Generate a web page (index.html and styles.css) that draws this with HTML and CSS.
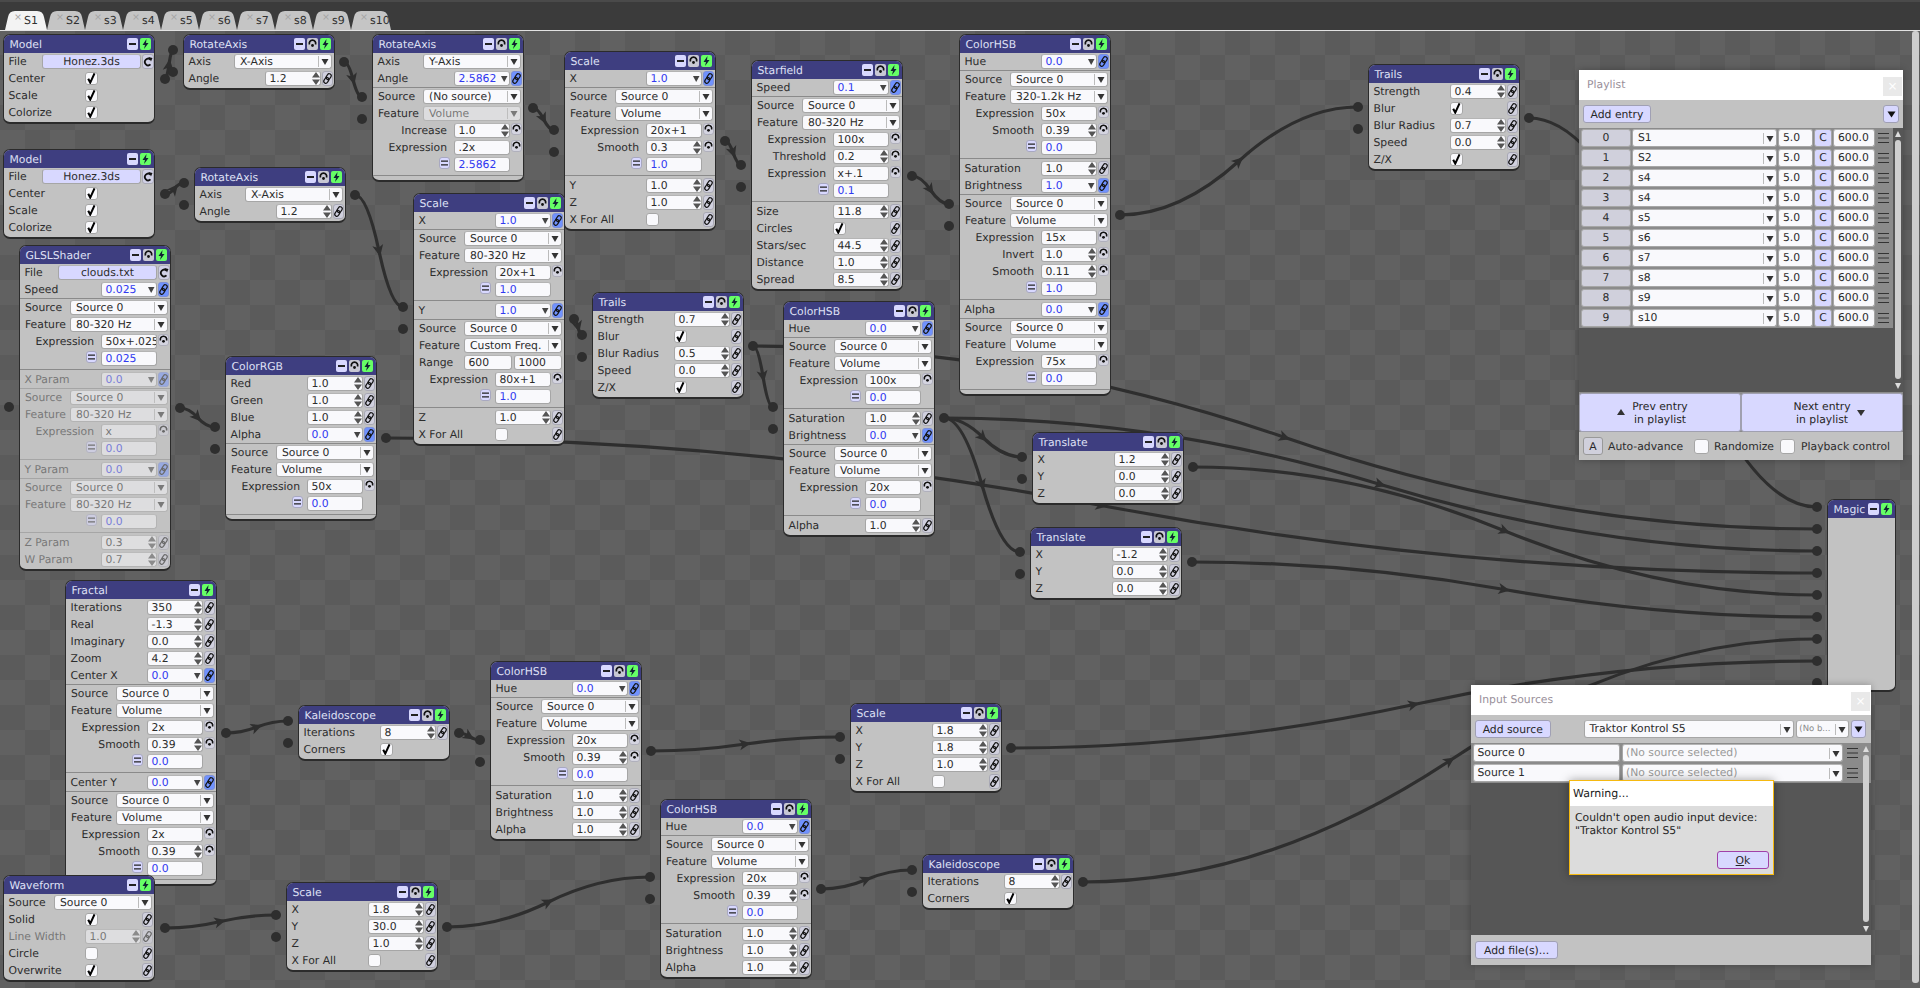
FILE: index.html
```html
<!DOCTYPE html>
<html lang="en">
<head>
<meta charset="utf-8">
<title>Node graph</title>
<link rel="stylesheet" href="styles.css">
</head>
<body>
<nav class="tabs">
<div class="tab on"><em>×</em>S1</div><div class="tab"><em>×</em>S2</div><div class="tab"><em>×</em>s3</div><div class="tab"><em>×</em>s4</div><div class="tab"><em>×</em>s5</div><div class="tab"><em>×</em>s6</div><div class="tab"><em>×</em>s7</div><div class="tab"><em>×</em>s8</div><div class="tab"><em>×</em>s9</div><div class="tab"><em>×</em>s10</div>
</nav>
<main class="canvas">
<svg class="wires" width="1920" height="957" viewBox="0 31 1920 957">
<defs>
<marker id="ar" markerUnits="userSpaceOnUse" markerWidth="14" markerHeight="14" refX="7" refY="7" orient="auto"><path d="M1 1.5L12.5 7L1 12.5L4 7Z" fill="#2e2e2e"/></marker>
<g id="pi"><circle r="5"/><path d="M0 0H11"/></g>
<g id="po"><circle r="5"/><path d="M0 0H-11"/></g>
</defs>
<g class="w" marker-mid="url(#ar)">
<path d="M165 79Q167 79 169 64.5T173 50"/>
<path d="M344 62Q348.5 62 353 79.5T362 97"/>
<path d="M533 108Q538 108 543.5 119T554 130"/>
<path d="M725 141Q729 141 733 152.5T741 165"/>
<path d="M912 176Q921 176 930.5 190T949 204"/>
<path d="M1120 215Q1179.5 215 1239 161T1358 107"/>
<path d="M1529 118Q1601 118 1673 312.5T1817 507"/>
<path d="M165 194Q170 194 174.5 188.5T184 183"/>
<path d="M355 195Q367 195 379 251T403 307"/>
<path d="M574 319Q576 319 578 327T582 335"/>
<path d="M753 346Q758 346 763 376.5T773 407"/>
<path d="M753 346Q1019 346 1285 437.5T1817 529"/>
<path d="M180 408Q189 408 197.5 417.5T215 427"/>
<path d="M386 438Q744 438 1101.5 505.5T1817 573"/>
<path d="M944 418Q963.5 418 983 437.5T1022 457"/>
<path d="M944 418Q963 418 982 485T1020 552"/>
<path d="M944 418Q1162 418 1380.5 484.5T1817 551"/>
<path d="M1193 467Q1349 467 1505 531T1817 595"/>
<path d="M1192 562Q1348 562 1504.5 589.5T1817 617"/>
<path d="M226 733Q241.5 733 257 727T288 721"/>
<path d="M459 733Q464 733 469.5 736.5T480 740"/>
<path d="M651 751Q698 751 745.5 744T840 737"/>
<path d="M1011 748Q1212.5 748 1414 704.5T1817 661"/>
<path d="M165 928Q193 928 220.5 921.5T276 915"/>
<path d="M447 927Q498 927 548.5 902T650 877"/>
<path d="M821 889Q844 889 866.5 879.5T912 870"/>
<path d="M1083 882Q1266.5 882 1450 760.5T1817 639"/>
</g>
<g class="p">
<use href="#pi" x="173" y="50"/><use href="#pi" x="173" y="72"/><use href="#pi" x="362" y="97"/><use href="#pi" x="362" y="119"/>
<use href="#pi" x="554" y="130"/><use href="#pi" x="554" y="152"/><use href="#pi" x="741" y="165"/><use href="#pi" x="741" y="187"/>
<use href="#pi" x="949" y="204"/><use href="#pi" x="949" y="226"/><use href="#pi" x="1358" y="107"/><use href="#pi" x="1358" y="129"/>
<use href="#pi" x="184" y="183"/><use href="#pi" x="184" y="205"/><use href="#pi" x="9" y="407"/><use href="#pi" x="215" y="427"/><use href="#pi" x="215" y="449"/>
<use href="#pi" x="403" y="307"/><use href="#pi" x="403" y="329"/><use href="#pi" x="582" y="335"/><use href="#pi" x="582" y="357"/>
<use href="#pi" x="773" y="407"/><use href="#pi" x="773" y="429"/><use href="#pi" x="1022" y="457"/><use href="#pi" x="1022" y="479"/>
<use href="#pi" x="1020" y="552"/><use href="#pi" x="1020" y="574"/><use href="#pi" x="288" y="721"/><use href="#pi" x="288" y="743"/>
<use href="#pi" x="480" y="740"/><use href="#pi" x="480" y="762"/><use href="#pi" x="840" y="737"/><use href="#pi" x="840" y="759"/>
<use href="#pi" x="276" y="915"/><use href="#pi" x="276" y="937"/><use href="#pi" x="650" y="877"/><use href="#pi" x="650" y="899"/>
<use href="#pi" x="912" y="870"/><use href="#pi" x="912" y="892"/>
<use href="#pi" x="1817" y="507"/><use href="#pi" x="1817" y="529"/><use href="#pi" x="1817" y="551"/><use href="#pi" x="1817" y="573"/><use href="#pi" x="1817" y="595"/><use href="#pi" x="1817" y="617"/><use href="#pi" x="1817" y="639"/><use href="#pi" x="1817" y="661"/><use href="#pi" x="1817" y="683"/>
<use href="#po" x="165" y="79"/><use href="#po" x="344" y="62"/><use href="#po" x="533" y="108"/><use href="#po" x="725" y="141"/><use href="#po" x="912" y="176"/><use href="#po" x="1120" y="215"/>
<use href="#po" x="1529" y="118"/><use href="#po" x="165" y="194"/><use href="#po" x="355" y="195"/><use href="#po" x="180" y="408"/><use href="#po" x="386" y="438"/><use href="#po" x="574" y="319"/>
<use href="#po" x="753" y="346"/><use href="#po" x="944" y="418"/><use href="#po" x="1193" y="467"/><use href="#po" x="1192" y="562"/><use href="#po" x="226" y="733"/><use href="#po" x="459" y="733"/>
<use href="#po" x="651" y="751"/><use href="#po" x="1011" y="748"/><use href="#po" x="165" y="928"/><use href="#po" x="447" y="927"/><use href="#po" x="821" y="889"/><use href="#po" x="1083" y="882"/>
</g>
</svg>

<div class="node" style="left:3px;top:3px"><div class="t"><span>Model</span><i class="bm"></i><i class="bg"></i></div>
<div class="r fl"><label>File</label><i class="f lv">Honez.3ds</i><i class="rl"></i></div>
<div class="r"><label>Center</label><i class="c on"></i></div>
<div class="r"><label>Scale</label><i class="c on"></i></div>
<div class="r"><label>Colorize</label><i class="c on"></i></div></div>

<div class="node" style="left:183px;top:3px"><div class="t"><span>RotateAxis</span><i class="bm"></i><i class="ba"></i><i class="bg"></i></div>
<div class="r s a"><label>Axis</label><i class="f sel">X-Axis</i></div>
<div class="r"><label>Angle</label><i class="f sp">1.2</i><i class="l"></i></div></div>

<div class="node" style="left:372px;top:3px"><div class="t"><span>RotateAxis</span><i class="bm"></i><i class="ba"></i><i class="bg"></i></div>
<div class="r s a"><label>Axis</label><i class="f sel">Y-Axis</i></div>
<div class="r"><label>Angle</label><i class="f d v">2.5862</i><i class="lb"></i></div>
<div class="sub">
<div class="r s"><label>Source</label><i class="f sel">(No source)</i></div>
<div class="r s"><label>Feature</label><i class="f sel dis">Volume</i></div>
<div class="r e"><label>Increase</label><i class="f sp">1.0</i><i class="m"></i></div>
<div class="r e"><label>Expression</label><i class="f">.2x</i><i class="m"></i></div>
<div class="r e"><i class="q"></i><i class="f v">2.5862</i></div></div></div>

<div class="node" style="left:564px;top:20px"><div class="t"><span>Scale</span><i class="bm"></i><i class="ba"></i><i class="bg"></i></div>
<div class="r"><label>X</label><i class="f d v">1.0</i><i class="lb"></i></div>
<div class="sub">
<div class="r s"><label>Source</label><i class="f sel">Source 0</i></div>
<div class="r s"><label>Feature</label><i class="f sel">Volume</i></div>
<div class="r e"><label>Expression</label><i class="f">20x+1</i><i class="m"></i></div>
<div class="r e"><label>Smooth</label><i class="f sp">0.3</i><i class="m"></i></div>
<div class="r e"><i class="q"></i><i class="f v">1.0</i></div></div>
<div class="r"><label>Y</label><i class="f sp">1.0</i><i class="l"></i></div>
<div class="r"><label>Z</label><i class="f sp">1.0</i><i class="l"></i></div>
<div class="r"><label>X For All</label><i class="c"></i><i class="l"></i></div></div>

<div class="node" style="left:751px;top:29px"><div class="t"><span>Starfield</span><i class="bm"></i><i class="ba"></i><i class="bg"></i></div>
<div class="r"><label>Speed</label><i class="f d v">0.1</i><i class="lb"></i></div>
<div class="sub">
<div class="r s"><label>Source</label><i class="f sel">Source 0</i></div>
<div class="r s"><label>Feature</label><i class="f sel">80-320 Hz</i></div>
<div class="r e"><label>Expression</label><i class="f">100x</i><i class="m"></i></div>
<div class="r e"><label>Threshold</label><i class="f sp">0.2</i><i class="m"></i></div>
<div class="r e"><label>Expression</label><i class="f">x+.1</i><i class="m"></i></div>
<div class="r e"><i class="q"></i><i class="f v">0.1</i></div></div>
<div class="r"><label>Size</label><i class="f sp">11.8</i><i class="l"></i></div>
<div class="r"><label>Circles</label><i class="c on"></i><i class="l"></i></div>
<div class="r"><label>Stars/sec</label><i class="f sp">44.5</i><i class="l"></i></div>
<div class="r"><label>Distance</label><i class="f sp">1.0</i><i class="l"></i></div>
<div class="r"><label>Spread</label><i class="f sp">8.5</i><i class="l"></i></div></div>

<div class="node" style="left:959px;top:3px"><div class="t"><span>ColorHSB</span><i class="bm"></i><i class="ba"></i><i class="bg"></i></div>
<div class="r"><label>Hue</label><i class="f d v">0.0</i><i class="lb"></i></div>
<div class="sub">
<div class="r s"><label>Source</label><i class="f sel">Source 0</i></div>
<div class="r s"><label>Feature</label><i class="f sel">320-1.2k Hz</i></div>
<div class="r e"><label>Expression</label><i class="f">50x</i><i class="m"></i></div>
<div class="r e"><label>Smooth</label><i class="f sp">0.39</i><i class="m"></i></div>
<div class="r e"><i class="q"></i><i class="f v">0.0</i></div></div>
<div class="r"><label>Saturation</label><i class="f sp">1.0</i><i class="l"></i></div>
<div class="r"><label>Brightness</label><i class="f d v">1.0</i><i class="lb"></i></div>
<div class="sub">
<div class="r s"><label>Source</label><i class="f sel">Source 0</i></div>
<div class="r s"><label>Feature</label><i class="f sel">Volume</i></div>
<div class="r e"><label>Expression</label><i class="f">15x</i><i class="m"></i></div>
<div class="r e"><label>Invert</label><i class="f sp">1.0</i><i class="m"></i></div>
<div class="r e"><label>Smooth</label><i class="f sp">0.11</i><i class="m"></i></div>
<div class="r e"><i class="q"></i><i class="f v">1.0</i></div></div>
<div class="r"><label>Alpha</label><i class="f d v">0.0</i><i class="lb"></i></div>
<div class="sub">
<div class="r s"><label>Source</label><i class="f sel">Source 0</i></div>
<div class="r s"><label>Feature</label><i class="f sel">Volume</i></div>
<div class="r e"><label>Expression</label><i class="f">75x</i><i class="m"></i></div>
<div class="r e"><i class="q"></i><i class="f v">0.0</i></div></div></div>

<div class="node" style="left:1368px;top:33px"><div class="t"><span>Trails</span><i class="bm"></i><i class="ba"></i><i class="bg"></i></div>
<div class="r"><label>Strength</label><i class="f sp">0.4</i><i class="l"></i></div>
<div class="r"><label>Blur</label><i class="c on"></i><i class="l"></i></div>
<div class="r"><label>Blur Radius</label><i class="f sp">0.7</i><i class="l"></i></div>
<div class="r"><label>Speed</label><i class="f sp">0.0</i><i class="l"></i></div>
<div class="r"><label>Z/X</label><i class="c on"></i><i class="l"></i></div></div>

<div class="node" style="left:3px;top:118px"><div class="t"><span>Model</span><i class="bm"></i><i class="bg"></i></div>
<div class="r fl"><label>File</label><i class="f lv">Honez.3ds</i><i class="rl"></i></div>
<div class="r"><label>Center</label><i class="c on"></i></div>
<div class="r"><label>Scale</label><i class="c on"></i></div>
<div class="r"><label>Colorize</label><i class="c on"></i></div></div>

<div class="node" style="left:194px;top:136px"><div class="t"><span>RotateAxis</span><i class="bm"></i><i class="ba"></i><i class="bg"></i></div>
<div class="r s a"><label>Axis</label><i class="f sel">X-Axis</i></div>
<div class="r"><label>Angle</label><i class="f sp">1.2</i><i class="l"></i></div></div>

<div class="node" style="left:19px;top:214px"><div class="t"><span>GLSLShader</span><i class="bm"></i><i class="ba"></i><i class="bg"></i></div>
<div class="r fl"><label>File</label><i class="f lv">clouds.txt</i><i class="rl"></i></div>
<div class="r"><label>Speed</label><i class="f d v">0.025</i><i class="lb"></i></div>
<div class="sub">
<div class="r s"><label>Source</label><i class="f sel">Source 0</i></div>
<div class="r s"><label>Feature</label><i class="f sel">80-320 Hz</i></div>
<div class="r e"><label>Expression</label><i class="f">50x+.025</i><i class="m"></i></div>
<div class="r e"><i class="q"></i><i class="f v">0.025</i></div></div>
<div class="dis">
<div class="r"><label>X Param</label><i class="f d v">0.0</i><i class="lb"></i></div>
<div class="sub">
<div class="r s"><label>Source</label><i class="f sel">Source 0</i></div>
<div class="r s"><label>Feature</label><i class="f sel">80-320 Hz</i></div>
<div class="r e"><label>Expression</label><i class="f">x</i><i class="m"></i></div>
<div class="r e"><i class="q"></i><i class="f v">0.0</i></div></div>
<div class="r"><label>Y Param</label><i class="f d v">0.0</i><i class="lb"></i></div>
<div class="sub">
<div class="r s"><label>Source</label><i class="f sel">Source 0</i></div>
<div class="r s"><label>Feature</label><i class="f sel">80-320 Hz</i></div>
<div class="r e"><i class="q"></i><i class="f v">0.0</i></div></div>
<div class="r"><label>Z Param</label><i class="f sp">0.3</i><i class="l"></i></div>
<div class="r"><label>W Param</label><i class="f sp">0.7</i><i class="l"></i></div>
</div></div>

<div class="node" style="left:225px;top:325px"><div class="t"><span>ColorRGB</span><i class="bm"></i><i class="ba"></i><i class="bg"></i></div>
<div class="r"><label>Red</label><i class="f sp">1.0</i><i class="l"></i></div>
<div class="r"><label>Green</label><i class="f sp">1.0</i><i class="l"></i></div>
<div class="r"><label>Blue</label><i class="f sp">1.0</i><i class="l"></i></div>
<div class="r"><label>Alpha</label><i class="f d v">0.0</i><i class="lb"></i></div>
<div class="sub">
<div class="r s"><label>Source</label><i class="f sel">Source 0</i></div>
<div class="r s"><label>Feature</label><i class="f sel">Volume</i></div>
<div class="r e"><label>Expression</label><i class="f">50x</i><i class="m"></i></div>
<div class="r e"><i class="q"></i><i class="f v">0.0</i></div></div></div>

<div class="node" style="left:413px;top:162px"><div class="t"><span>Scale</span><i class="bm"></i><i class="ba"></i><i class="bg"></i></div>
<div class="r"><label>X</label><i class="f d v">1.0</i><i class="lb"></i></div>
<div class="sub">
<div class="r s"><label>Source</label><i class="f sel">Source 0</i></div>
<div class="r s"><label>Feature</label><i class="f sel">80-320 Hz</i></div>
<div class="r e"><label>Expression</label><i class="f">20x+1</i><i class="m"></i></div>
<div class="r e"><i class="q"></i><i class="f v">1.0</i></div></div>
<div class="r"><label>Y</label><i class="f d v">1.0</i><i class="lb"></i></div>
<div class="sub">
<div class="r s"><label>Source</label><i class="f sel">Source 0</i></div>
<div class="r s"><label>Feature</label><i class="f sel">Custom Freq.</i></div>
<div class="r s"><label>Range</label><span class="rg"><i class="f">600</i><i class="f">1000</i></span></div>
<div class="r e"><label>Expression</label><i class="f">80x+1</i><i class="m"></i></div>
<div class="r e"><i class="q"></i><i class="f v">1.0</i></div></div>
<div class="r"><label>Z</label><i class="f sp">1.0</i><i class="l"></i></div>
<div class="r"><label>X For All</label><i class="c"></i><i class="l"></i></div></div>

<div class="node" style="left:592px;top:261px"><div class="t"><span>Trails</span><i class="bm"></i><i class="ba"></i><i class="bg"></i></div>
<div class="r"><label>Strength</label><i class="f sp">0.7</i><i class="l"></i></div>
<div class="r"><label>Blur</label><i class="c on"></i><i class="l"></i></div>
<div class="r"><label>Blur Radius</label><i class="f sp">0.5</i><i class="l"></i></div>
<div class="r"><label>Speed</label><i class="f sp">0.0</i><i class="l"></i></div>
<div class="r"><label>Z/X</label><i class="c on"></i><i class="l"></i></div></div>

<div class="node" style="left:783px;top:270px"><div class="t"><span>ColorHSB</span><i class="bm"></i><i class="ba"></i><i class="bg"></i></div>
<div class="r"><label>Hue</label><i class="f d v">0.0</i><i class="lb"></i></div>
<div class="sub">
<div class="r s"><label>Source</label><i class="f sel">Source 0</i></div>
<div class="r s"><label>Feature</label><i class="f sel">Volume</i></div>
<div class="r e"><label>Expression</label><i class="f">100x</i><i class="m"></i></div>
<div class="r e"><i class="q"></i><i class="f v">0.0</i></div></div>
<div class="r"><label>Saturation</label><i class="f sp">1.0</i><i class="l"></i></div>
<div class="r"><label>Brightness</label><i class="f d v">0.0</i><i class="lb"></i></div>
<div class="sub">
<div class="r s"><label>Source</label><i class="f sel">Source 0</i></div>
<div class="r s"><label>Feature</label><i class="f sel">Volume</i></div>
<div class="r e"><label>Expression</label><i class="f">20x</i><i class="m"></i></div>
<div class="r e"><i class="q"></i><i class="f v">0.0</i></div></div>
<div class="r"><label>Alpha</label><i class="f sp">1.0</i><i class="l"></i></div></div>

<div class="node" style="left:1032px;top:401px"><div class="t"><span>Translate</span><i class="bm"></i><i class="ba"></i><i class="bg"></i></div>
<div class="r"><label>X</label><i class="f sp">1.2</i><i class="l"></i></div>
<div class="r"><label>Y</label><i class="f sp">0.0</i><i class="l"></i></div>
<div class="r"><label>Z</label><i class="f sp">0.0</i><i class="l"></i></div></div>

<div class="node" style="left:1030px;top:496px"><div class="t"><span>Translate</span><i class="bm"></i><i class="ba"></i><i class="bg"></i></div>
<div class="r"><label>X</label><i class="f sp">-1.2</i><i class="l"></i></div>
<div class="r"><label>Y</label><i class="f sp">0.0</i><i class="l"></i></div>
<div class="r"><label>Z</label><i class="f sp">0.0</i><i class="l"></i></div></div>

<div class="node" style="left:65px;top:549px"><div class="t"><span>Fractal</span><i class="bm"></i><i class="bg"></i></div>
<div class="r"><label>Iterations</label><i class="f sp">350</i><i class="l"></i></div>
<div class="r"><label>Real</label><i class="f sp">-1.3</i><i class="l"></i></div>
<div class="r"><label>Imaginary</label><i class="f sp">0.0</i><i class="l"></i></div>
<div class="r"><label>Zoom</label><i class="f sp">4.2</i><i class="l"></i></div>
<div class="r"><label>Center X</label><i class="f d v">0.0</i><i class="lb"></i></div>
<div class="sub">
<div class="r s"><label>Source</label><i class="f sel">Source 0</i></div>
<div class="r s"><label>Feature</label><i class="f sel">Volume</i></div>
<div class="r e"><label>Expression</label><i class="f">2x</i><i class="m"></i></div>
<div class="r e"><label>Smooth</label><i class="f sp">0.39</i><i class="m"></i></div>
<div class="r e"><i class="q"></i><i class="f v">0.0</i></div></div>
<div class="r"><label>Center Y</label><i class="f d v">0.0</i><i class="lb"></i></div>
<div class="sub">
<div class="r s"><label>Source</label><i class="f sel">Source 0</i></div>
<div class="r s"><label>Feature</label><i class="f sel">Volume</i></div>
<div class="r e"><label>Expression</label><i class="f">2x</i><i class="m"></i></div>
<div class="r e"><label>Smooth</label><i class="f sp">0.39</i><i class="m"></i></div>
<div class="r e"><i class="q"></i><i class="f v">0.0</i></div></div></div>

<div class="node" style="left:298px;top:674px"><div class="t"><span>Kaleidoscope</span><i class="bm"></i><i class="ba"></i><i class="bg"></i></div>
<div class="r"><label>Iterations</label><i class="f sp">8</i><i class="l"></i></div>
<div class="r"><label>Corners</label><i class="c on"></i></div></div>

<div class="node" style="left:3px;top:844px"><div class="t"><span>Waveform</span><i class="bm"></i><i class="bg"></i></div>
<div class="r s a"><label>Source</label><i class="f sel">Source 0</i></div>
<div class="r"><label>Solid</label><i class="c on"></i><i class="l"></i></div>
<div class="r dis"><label>Line Width</label><i class="f sp">1.0</i><i class="l"></i></div>
<div class="r"><label>Circle</label><i class="c"></i><i class="l"></i></div>
<div class="r"><label>Overwrite</label><i class="c on"></i><i class="l"></i></div></div>

<div class="node" style="left:286px;top:851px"><div class="t"><span>Scale</span><i class="bm"></i><i class="ba"></i><i class="bg"></i></div>
<div class="r"><label>X</label><i class="f sp">1.8</i><i class="l"></i></div>
<div class="r"><label>Y</label><i class="f sp">30.0</i><i class="l"></i></div>
<div class="r"><label>Z</label><i class="f sp">1.0</i><i class="l"></i></div>
<div class="r"><label>X For All</label><i class="c"></i><i class="l"></i></div></div>

<div class="node" style="left:490px;top:630px"><div class="t"><span>ColorHSB</span><i class="bm"></i><i class="ba"></i><i class="bg"></i></div>
<div class="r"><label>Hue</label><i class="f d v">0.0</i><i class="lb"></i></div>
<div class="sub">
<div class="r s"><label>Source</label><i class="f sel">Source 0</i></div>
<div class="r s"><label>Feature</label><i class="f sel">Volume</i></div>
<div class="r e"><label>Expression</label><i class="f">20x</i><i class="m"></i></div>
<div class="r e"><label>Smooth</label><i class="f sp">0.39</i><i class="m"></i></div>
<div class="r e"><i class="q"></i><i class="f v">0.0</i></div></div>
<div class="r"><label>Saturation</label><i class="f sp">1.0</i><i class="l"></i></div>
<div class="r"><label>Brightness</label><i class="f sp">1.0</i><i class="l"></i></div>
<div class="r"><label>Alpha</label><i class="f sp">1.0</i><i class="l"></i></div></div>

<div class="node" style="left:850px;top:672px"><div class="t"><span>Scale</span><i class="bm"></i><i class="ba"></i><i class="bg"></i></div>
<div class="r"><label>X</label><i class="f sp">1.8</i><i class="l"></i></div>
<div class="r"><label>Y</label><i class="f sp">1.8</i><i class="l"></i></div>
<div class="r"><label>Z</label><i class="f sp">1.0</i><i class="l"></i></div>
<div class="r"><label>X For All</label><i class="c"></i><i class="l"></i></div></div>

<div class="node" style="left:660px;top:768px"><div class="t"><span>ColorHSB</span><i class="bm"></i><i class="ba"></i><i class="bg"></i></div>
<div class="r"><label>Hue</label><i class="f d v">0.0</i><i class="lb"></i></div>
<div class="sub">
<div class="r s"><label>Source</label><i class="f sel">Source 0</i></div>
<div class="r s"><label>Feature</label><i class="f sel">Volume</i></div>
<div class="r e"><label>Expression</label><i class="f">20x</i><i class="m"></i></div>
<div class="r e"><label>Smooth</label><i class="f sp">0.39</i><i class="m"></i></div>
<div class="r e"><i class="q"></i><i class="f v">0.0</i></div></div>
<div class="r"><label>Saturation</label><i class="f sp">1.0</i><i class="l"></i></div>
<div class="r"><label>Brightness</label><i class="f sp">1.0</i><i class="l"></i></div>
<div class="r"><label>Alpha</label><i class="f sp">1.0</i><i class="l"></i></div></div>

<div class="node" style="left:922px;top:823px"><div class="t"><span>Kaleidoscope</span><i class="bm"></i><i class="ba"></i><i class="bg"></i></div>
<div class="r"><label>Iterations</label><i class="f sp">8</i><i class="l"></i></div>
<div class="r"><label>Corners</label><i class="c on"></i></div></div>

<div class="node magic" style="left:1827px;top:468px"><div class="t"><span>Magic</span><i class="bm"></i><i class="bg"></i></div></div>

<section class="win pl">
<header class="wt">Playlist<i class="x">×</i></header>
<div class="tb"><button class="btn">Add entry</button><i class="drop"></i></div>
<div class="lst">
<div class="rows">
<div class="pr"><i class="idx">0</i><i class="f sel">S1</i><i class="f">5.0</i><i class="cb">C</i><i class="f">600.0</i><i class="bur"></i></div>
<div class="pr"><i class="idx">1</i><i class="f sel">S2</i><i class="f">5.0</i><i class="cb">C</i><i class="f">600.0</i><i class="bur"></i></div>
<div class="pr"><i class="idx">2</i><i class="f sel">s4</i><i class="f">5.0</i><i class="cb">C</i><i class="f">600.0</i><i class="bur"></i></div>
<div class="pr"><i class="idx">3</i><i class="f sel">s4</i><i class="f">5.0</i><i class="cb">C</i><i class="f">600.0</i><i class="bur"></i></div>
<div class="pr"><i class="idx">4</i><i class="f sel">s5</i><i class="f">5.0</i><i class="cb">C</i><i class="f">600.0</i><i class="bur"></i></div>
<div class="pr"><i class="idx">5</i><i class="f sel">s6</i><i class="f">5.0</i><i class="cb">C</i><i class="f">600.0</i><i class="bur"></i></div>
<div class="pr"><i class="idx">6</i><i class="f sel">s7</i><i class="f">5.0</i><i class="cb">C</i><i class="f">600.0</i><i class="bur"></i></div>
<div class="pr"><i class="idx">7</i><i class="f sel">s8</i><i class="f">5.0</i><i class="cb">C</i><i class="f">600.0</i><i class="bur"></i></div>
<div class="pr"><i class="idx">8</i><i class="f sel">s9</i><i class="f">5.0</i><i class="cb">C</i><i class="f">600.0</i><i class="bur"></i></div>
<div class="pr"><i class="idx">9</i><i class="f sel">s10</i><i class="f">5.0</i><i class="cb">C</i><i class="f">600.0</i><i class="bur"></i></div>
</div>
<div class="sb"><i class="up"></i><i class="th"></i><i class="dn"></i></div>
</div>
<div class="nav"><button class="nb"><i class="tu"></i><span>Prev entry<br>in playlist</span></button><button class="nb"><span>Next entry<br>in playlist</span><i class="td"></i></button></div>
<div class="opts"><button class="ab">A</button><span>Auto-advance</span><i class="c big"></i><span>Randomize</span><i class="c big"></i><span>Playback control</span></div>
</section>

<section class="win is">
<header class="wt">Input Sources<i class="x">×</i></header>
<div class="tb"><button class="btn ad">Add source</button><i class="f sel tk">Traktor Kontrol S5</i><i class="f sel nb2">(No b...</i><i class="drop"></i></div>
<div class="lst">
<div class="rows">
<div class="ir"><i class="f">Source 0</i><i class="f sel mut">(No source selected)</i><i class="bur"></i></div>
<div class="ir"><i class="f">Source 1</i><i class="f sel mut">(No source selected)</i><i class="bur"></i></div>
</div>
<div class="sb"><i class="up"></i><i class="th"></i><i class="dn"></i></div>
</div>
<div class="ft"><button class="btn af">Add file(s)...</button></div>
<div class="warn">
<header class="wh">Warning...</header>
<p>Couldn't open audio input device:<br>"Traktor Kontrol S5"</p>
<button class="ok"><u>O</u>k</button>
</div>
</section>
<div class="vs"></div>
</main>
</body>
</html>
```

FILE: styles.css
```css
*{box-sizing:border-box}
html,body{margin:0;height:988px;overflow:hidden}
body{background:#3b3b3b;color:#2c2c2c;font:10.8px/15px "DejaVu Sans",sans-serif;text-rendering:geometricPrecision}
button{text-rendering:geometricPrecision}
i,em{font-style:normal;display:block}

.tabs{height:31px;padding:9px 0 0 5px;display:flex;border-top:2px solid #4a4a4a;border-bottom:1px solid #e2e2e2;background:#3b3b3b}
.tab{width:38px;height:19px;position:relative;padding-left:19px;font-size:11px;line-height:20px;background:#c5c5c5;color:#303030;clip-path:path("M0 19L3 6Q4 0 10 0H28Q34 0 35 6L38 19Z")}
.tab.on{width:42px;background:#f3f3f3;clip-path:path("M0 19L3 6Q4 0 10 0H32Q38 0 39 6L42 19Z")}
.tab em{position:absolute;left:9px;top:2px;font-size:9.5px;line-height:10px;color:#a4a4a4}
.tab:last-child{width:40px;clip-path:path("M0 19L3 6Q4 0 10 0H30Q36 0 37 6L40 19Z")}

.canvas{position:relative;height:957px;background:repeating-conic-gradient(#5b5b5b 0 25%,#616161 0 50%) 0 -1px/50px 50px;overflow:hidden}
.wires{position:absolute;left:0;top:0}
.w path{fill:none;stroke:#2e2e2e;stroke-width:3.2}
.p{fill:#2e2e2e;stroke:none}
.p path{stroke:#2e2e2e;stroke-width:2.5}

.node{position:absolute;width:152px;border:1px solid #2b2b2b;border-bottom-width:2px;border-radius:7px;background:#c2c2c2;overflow:hidden;padding-bottom:1px}
.magic{width:69px;height:193px}
.t{height:18px;display:flex;align-items:center;gap:2px;padding:0 3px 0 5.5px;background:#3e3e80;color:#dfe0f5}
.t span{flex:1;white-space:nowrap}
.t i{width:11px;height:12px;border-radius:2px}
.bm{background:#d8d8ff url("data:image/svg+xml,%3Csvg xmlns='http://www.w3.org/2000/svg' width='11' height='12'%3E%3Cpath d='M2 5h7v2H2z' fill='%23222'/%3E%3C/svg%3E")}
.ba{background:#c8c8d4 url("data:image/svg+xml,%3Csvg xmlns='http://www.w3.org/2000/svg' width='11' height='12'%3E%3Cpath d='M2.5 6.5A3.2 3.2 0 1 1 8.5 6.5' fill='none' stroke='%23111' stroke-width='1.7'/%3E%3Ccircle cx='5.5' cy='7.5' r='1.4' fill='%23111'/%3E%3C/svg%3E")}
.bg{background:#66ff66 url("data:image/svg+xml,%3Csvg xmlns='http://www.w3.org/2000/svg' width='11' height='12'%3E%3Cpath d='M6.5 1L2.5 7H5L4 11L8.5 5H6Z' fill='%23123'/%3E%3C/svg%3E")}

.r{display:grid;grid-template-columns:75.5px 56px 11px;column-gap:1px;height:17px;padding-left:4.5px;align-items:center;white-space:nowrap}
.r.s{grid-template-columns:45px 98px;padding-left:5px;column-gap:0}
.r.s.a{grid-template-columns:45.5px 98px;padding-left:4.5px}
.r.fl{grid-template-columns:32.5px 99px 12px;column-gap:1px}
.r.e label{text-align:right;padding-right:6px}
.sub{border-top:1px solid #8a8a8a;border-bottom:1px solid #8a8a8a;padding-bottom:2px;margin-bottom:1px}
.sub:last-child{margin-bottom:3px}
.dis{opacity:.5}

.f{height:15px;border:1px solid #a6a6a6;border-top-color:#b4b4b4;border-radius:3px;background:#f9f9fc;padding-left:3.5px;line-height:13px;overflow:hidden;white-space:nowrap}
.v{color:#3038f0}
.lv{background:#d8d8ff;text-align:center;padding:0}
.sel{padding-left:5px;padding-right:14px;background:#f9f9fc url("data:image/svg+xml,%3Csvg xmlns='http://www.w3.org/2000/svg' width='13' height='13'%3E%3Cpath d='M.5 1v11' stroke='%23bbb'/%3E%3Cpath d='M3.5 4h7L7 10z' fill='%23333'/%3E%3C/svg%3E") no-repeat right center}
.sp{background:#f9f9fc url("data:image/svg+xml,%3Csvg xmlns='http://www.w3.org/2000/svg' width='8' height='13'%3E%3Cpath d='M4 0L8 5.5H0zM4 13L0 7.5H8z' fill='%23555'/%3E%3C/svg%3E") no-repeat right center}
.d{background:#f9f9fc url("data:image/svg+xml,%3Csvg xmlns='http://www.w3.org/2000/svg' width='7' height='6'%3E%3Cpath d='M0 0h6.5L3.2 6z' fill='%23444'/%3E%3C/svg%3E") no-repeat right 1px center}
.l,.lb,.rl{height:15px;border:1px solid #a8a8b4;border-radius:3px;background:#d0d0de url("data:image/svg+xml,%3Csvg xmlns='http://www.w3.org/2000/svg' width='9' height='13'%3E%3Cg fill='none' stroke='%23151515' stroke-width='1.25' transform='rotate(32 4.5 6.5)'%3E%3Crect x='2.5' y='1.3' width='4' height='6' rx='2'/%3E%3Crect x='2.5' y='5.7' width='4' height='6' rx='2'/%3E%3C/g%3E%3C/svg%3E") no-repeat center}
.lb{background-color:#7092ff;border-color:#7c8fd8}
.rl{background-image:url("data:image/svg+xml,%3Csvg xmlns='http://www.w3.org/2000/svg' width='10' height='13'%3E%3Cpath d='M7.5 4.6A3.3 3.3 0 1 0 7.5 9.4' fill='none' stroke='%23111' stroke-width='1.8'/%3E%3Cpath d='M5.5 2L9.5 3L8 6.5Z' fill='%23111'/%3E%3C/svg%3E");background-color:#d0d0e6}
.m{height:12px;align-self:start;margin-top:1px;border:1px solid #b0b0bc;border-radius:3px;background:#d4d4e0 url("data:image/svg+xml,%3Csvg xmlns='http://www.w3.org/2000/svg' width='9' height='10'%3E%3Cpath d='M1.5 5.5A3.2 3.2 0 1 1 7.5 5.5' fill='none' stroke='%23111' stroke-width='1.6'/%3E%3Ccircle cx='4.5' cy='6.3' r='1.4' fill='%23111'/%3E%3C/svg%3E") no-repeat center}
.q{width:11px;height:12px;justify-self:end;align-self:start;margin:1px 3px 0 0;border:1px solid #a8a8c0;border-radius:3px;background:#d8d8ff url("data:image/svg+xml,%3Csvg xmlns='http://www.w3.org/2000/svg' width='9' height='10'%3E%3Cpath d='M1 2.5h7v1.2H1zM1 6.3h7v1.2H1z' fill='%23222'/%3E%3C/svg%3E") no-repeat center}
.c{width:12.5px;height:12.5px;border:1px solid #a6a6a6;border-radius:3px;background:#f9f9fc no-repeat center}
.c.on{background-image:url("data:image/svg+xml,%3Csvg xmlns='http://www.w3.org/2000/svg' width='11' height='11'%3E%3Cpath d='M2.4 5.8L4.4 9.6L8.6 .6' fill='none' stroke='%23000' stroke-width='2'/%3E%3C/svg%3E")}
.rg{display:grid;grid-template-columns:48px 48px;gap:2px}

.win{position:absolute;display:flex;flex-direction:column;background:#565656;box-shadow:0 0 7px rgba(0,0,0,.28)}
.pl{left:1579px;top:39px;width:324px;height:390px}
.is{left:1471px;top:654px;width:400px;height:280px}
.wt{height:30px;padding-left:8px;line-height:30px;background:#fff;color:#998f9a;position:relative;flex:none}
.x{position:absolute;right:1px;top:7px;width:19px;height:19px;background:#e9e9e9;color:#fff;text-align:center;line-height:19px;font-size:12px}
.tb{height:28px;flex:none;display:flex;align-items:center;padding:0 4px;background:#c2c2c2;gap:2px}
.tb .sel{height:18px;line-height:16px}
.btn{height:18px;padding:0;border:1px solid #a0a0b4;border-radius:3px;background:#d8d8ff;color:#262626;font:inherit;line-height:15px}
.pl .btn{width:68px}
.drop{margin-left:auto;width:16px;height:18px;border:1px solid #a0a0b4;border-radius:3px;background:#d8d8ff url("data:image/svg+xml,%3Csvg xmlns='http://www.w3.org/2000/svg' width='9' height='7'%3E%3Cpath d='M.5 .5h8L4.5 6.5z' fill='%23111'/%3E%3C/svg%3E") no-repeat center}
.lst{flex:1;display:flex;min-height:0}
.rows{flex:1;min-width:0}
.pr,.ir{display:grid;height:20px;padding:1px 0 1px 2px;background:#8b8b8b;column-gap:1px;align-items:stretch}
.pr{grid-template-columns:50px 145px 35px 18px 42px 14px}
.pr .f,.ir .f,.idx,.cb{height:18px;line-height:16px}
.pr .f:not(.sel){padding-left:4px}
.idx{background:#d0d0dc;border:1px solid #a6a6a6;border-radius:3px;text-align:center}
.cb{background:#d8d8ff;border:1px solid #a6a6a6;border-radius:3px;text-align:center}
.bur{background:url("data:image/svg+xml,%3Csvg xmlns='http://www.w3.org/2000/svg' width='11' height='12'%3E%3Cpath d='M0 1.5h11M0 6h11M0 10.5h11' stroke='%23333'/%3E%3C/svg%3E") no-repeat center}
.sb{width:10px;flex:none;display:flex;flex-direction:column;align-items:center;padding:3px 0 3px}
.up{border:solid transparent;border-width:0 3.5px 6px;border-bottom-color:#ddd;margin-bottom:3px}
.dn{border:solid transparent;border-width:6px 3.5px 0;border-top-color:#ddd;margin-top:4px}
.th{flex:1;width:6px;border-radius:3px;background:#cfcfcf}
.nav{height:40px;flex:none;display:flex;background:#8b8b8b;padding-top:1px}
.nb{flex:1;position:relative;padding:0;border:1px solid #a0a0b0;border-radius:3px;background:#d8d8ff;color:#262626;font:inherit;line-height:13px}
.nb span{display:block;text-align:center}
.tu{position:absolute;left:37px;top:15px;border:solid transparent;border-width:0 4px 6px;border-bottom-color:#333}
.td{position:absolute;right:37px;top:16px;border:solid transparent;border-width:6px 4px 0;border-top-color:#333}
.opts{height:28px;flex:none;display:grid;grid-template-columns:25px 85.5px 20.5px 66px 21px auto;align-items:center;padding-left:4px;background:#c2c2c2;white-space:nowrap}
.ab{width:20px;height:18px;padding:0;border:1px solid #999;border-radius:3px;background:#d0d0dc;color:#262626;font:inherit}
.c.big{width:15px;height:15px}

.ad{width:76px}
.tk{width:212px;margin-left:31px}
.nb2{width:53px;font-size:8.5px;color:#888;padding-left:2px}
.is .drop{margin-left:0;width:15px;margin-right:1px}
.ir{grid-template-columns:147px 221px 15px;column-gap:2px}
.is .lst{background:linear-gradient(#8b8b8b 40px,#565656 0)}
.is .rows{width:390px}
.ir .sel{padding-left:3px}
.mut{color:#999}
.ft{height:30px;flex:none;display:flex;align-items:center;padding-left:4px;background:#c2c2c2}
.af{width:83px}
.warn{position:absolute;left:98px;top:95px;width:205px;height:95px;border:1px solid #f6b910;background:#dcdcdc;box-shadow:0 0 9px rgba(0,0,0,.35);color:#262626}
.wh{height:25px;padding-left:3px;line-height:25px;background:#fff;color:#1c1c1c;font-size:11px}
.warn p{margin:5px 0 0 5px;line-height:13px}
.ok{position:absolute;right:4px;bottom:5px;width:52px;height:18px;padding:0;border:1px solid #a040a8;border-radius:3px;background:#d8d8ff;color:#262626;font:inherit}
.vs{position:absolute;left:1912px;top:0;width:7px;height:952px;border-radius:3px;background:#cdcdcd}
```
